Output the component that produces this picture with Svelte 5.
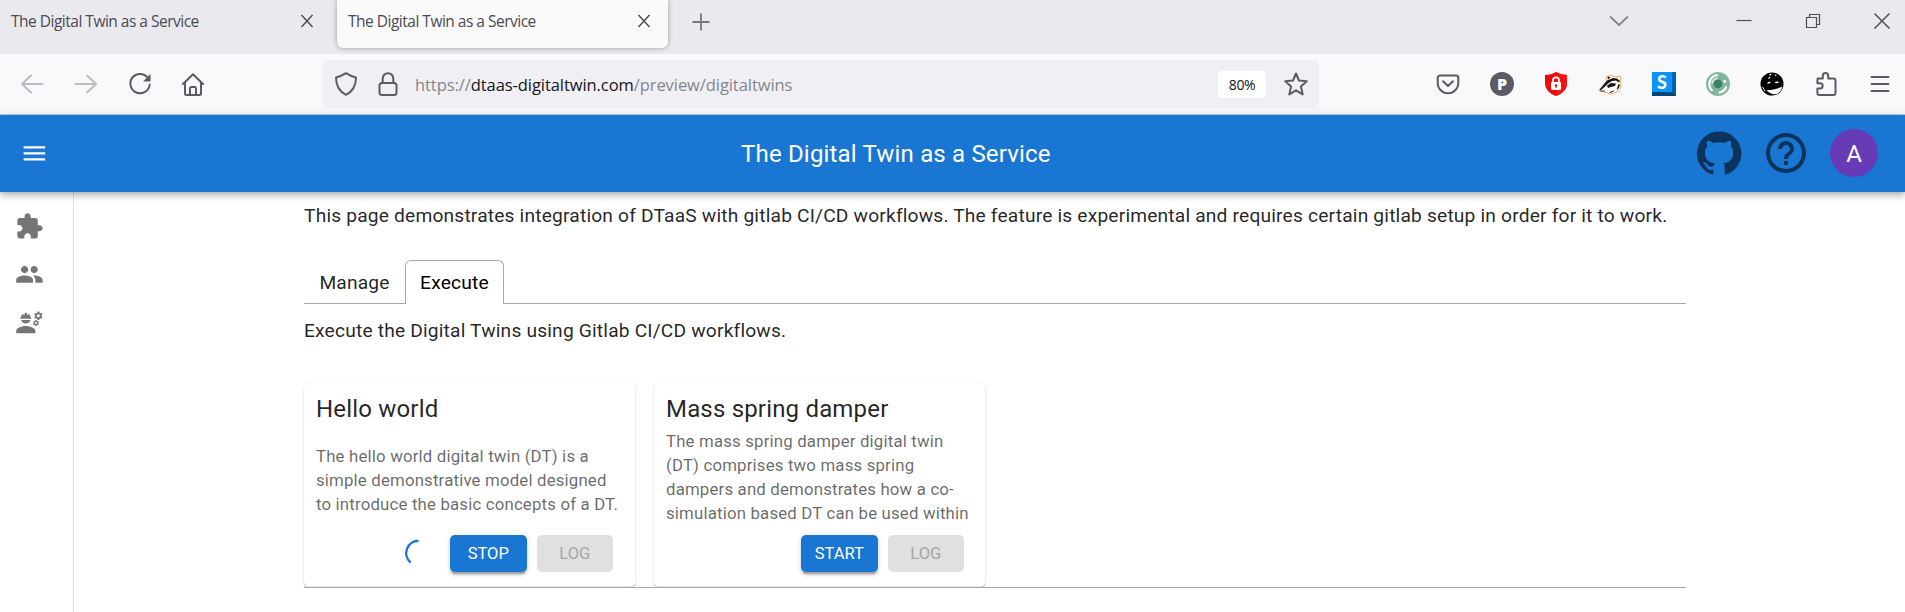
<script>
  const tabs = [
    { title: 'The Digital Twin as a Service', active: false },
    { title: 'The Digital Twin as a Service', active: true }
  ];
  const cards = [
    {
      name: 'Hello world',
      lines: ['The hello world digital twin (DT) is a', 'simple demonstrative model designed', 'to introduce the basic concepts of a DT.'],
      action: 'Stop',
      running: true
    },
    {
      name: 'Mass spring damper',
      lines: ['The mass spring damper digital twin', '(DT) comprises two mass spring', 'dampers and demonstrates how a co-', 'simulation based DT can be used within'],
      action: 'Start',
      running: false
    }
  ];
  const menu = [
    'M20.5 11H19V7c0-1.1-.9-2-2-2h-4V3.5C13 2.12 11.88 1 10.5 1S8 2.12 8 3.5V5H4c-1.1 0-1.99.9-1.99 2v3.8H3.5c1.49 0 2.7 1.21 2.7 2.7s-1.21 2.7-2.7 2.7H2V20c0 1.1.9 2 2 2h3.8v-1.5c0-1.49 1.21-2.7 2.7-2.7 1.49 0 2.7 1.21 2.7 2.7V22H17c1.1 0 2-.9 2-2v-4h1.5c1.38 0 2.5-1.12 2.5-2.5S21.88 11 20.5 11z',
    'M16 11c1.66 0 2.99-1.34 2.99-3S17.66 5 16 5c-1.66 0-3 1.34-3 3s1.34 3 3 3zm-8 0c1.66 0 2.99-1.34 2.99-3S9.66 5 8 5C6.34 5 5 6.34 5 8s1.34 3 3 3zm0 2c-2.33 0-7 1.17-7 3.5V19h14v-2.5c0-2.33-4.67-3.5-7-3.5zm8 0c-.29 0-.62.02-.97.05 1.16.84 1.97 1.97 1.97 3.45V19h6v-2.5c0-2.33-4.67-3.5-7-3.5z',
    'M9 15c-2.67 0-8 1.34-8 4v2h16v-2c0-2.66-5.33-4-8-4zM22.1 6.84c.01-.11.02-.22.02-.34 0-.12-.01-.23-.03-.34l.74-.58c.07-.05.08-.15.04-.22l-.7-1.21c-.04-.08-.14-.1-.21-.08l-.86.35c-.18-.14-.38-.25-.59-.34l-.13-.93c-.02-.09-.09-.15-.18-.15h-1.4c-.09 0-.16.06-.17.15l-.13.93c-.21.09-.41.21-.59.34l-.87-.35c-.08-.03-.17 0-.21.08l-.7 1.21c-.04.08-.03.17.04.22l.74.58c-.02.11-.03.23-.03.34 0 .11.01.23.03.34l-.74.58c-.07.05-.08.15-.04.22l.7 1.21c.04.08.14.1.21.08l.87-.35c.18.14.38.25.59.34l.13.93c.01.09.08.15.17.15h1.4c.09 0 .16-.06.17-.15l.13-.93c.21-.09.41-.21.59-.34l.87.35c.08.03.17 0 .21-.08l.7-1.21c.04-.08.03-.17-.04-.22l-.73-.58zm-2.6.91c-.69 0-1.25-.56-1.25-1.25s.56-1.25 1.25-1.25 1.25.56 1.25 1.25-.56 1.25-1.25 1.25zM19.92 11.68l-.5-.87c-.03-.06-.1-.08-.15-.06l-.62.25c-.13-.1-.27-.18-.42-.24l-.09-.66c-.02-.06-.08-.1-.14-.1h-1c-.06 0-.11.04-.12.11l-.09.66c-.15.06-.29.15-.42.24l-.62-.25c-.06-.02-.12 0-.15.06l-.5.87c-.03.06-.02.12.03.16l.53.41c-.01.08-.02.16-.02.24 0 .08.01.17.02.24l-.53.41c-.05.04-.06.11-.03.16l.5.87c.03.06.1.08.15.06l.62-.25c.13.1.27.18.42.24l.09.66c.01.07.06.11.12.11h1c.06 0 .12-.04.12-.11l.09-.66c.15-.06.29-.15.42-.24l.62.25c.06.02.12 0 .15-.06l.5-.87c.03-.06.02-.12-.03-.16l-.52-.41c.01-.08.02-.16.02-.24 0-.08-.01-.17-.02-.24l.53-.41c.05-.04.06-.11.04-.17zm-2.42 1.65c-.46 0-.83-.38-.83-.83 0-.46.38-.83.83-.83s.83.38.83.83c0 .46-.37.83-.83.83zM4.74 9h8.53c.27 0 .49-.22.49-.49v-.02c0-.27-.22-.49-.49-.49H13c0-1.48-.81-2.75-2-3.45v.95c0 .28-.22.5-.5.5s-.5-.22-.5-.5V4.14C9.68 4.06 9.35 4 9 4s-.68.06-1 .14V5.5c0 .28-.22.5-.5.5S7 5.78 7 5.5v-.95C5.81 5.25 5 6.52 5 8h-.26c-.27 0-.49.22-.49.49v.03c0 .26.22.48.49.48zM9 13c1.86 0 3.41-1.28 3.86-3H5.14c.45 1.72 2 3 3.86 3z'
  ];
</script>

<div class="window">
  <div class="tabstrip">
    {#each tabs as t}
      <div class="btab" class:current={t.active}>
        <span>{t.title}</span>
        <svg width="14" height="14" viewBox="0 0 14 14"><path d="M1.5 1l11 12M12.5 1l-11 12" /></svg>
      </div>
    {/each}
    <svg class="plus" width="18" height="18" viewBox="0 0 18 18"><path d="M9 .5v17M.5 9h17" /></svg>
    <div class="controls">
      <svg class="chev" width="20" height="12" viewBox="0 0 20 12"><path d="M1 1.5l9 8.5 9-8.5" /></svg>
      <svg class="min" width="16" height="16" viewBox="0 0 16 16"><path d="M.5 7.5h15" /></svg>
      <svg class="restore" width="16" height="16" viewBox="0 0 16 16"><path d="M1.5 4.5h10v10h-10zM4.5 4V1.5h10v10H12" /></svg>
      <svg width="18" height="18" viewBox="0 0 18 18"><path d="M1.5 1.5l15 15M16.5 1.5l-15 15" /></svg>
    </div>
  </div>

  <div class="toolbar">
    <div class="nav">
      <svg class="dim" viewBox="0 0 24 24"><path d="M22.5 12H2.5M11 3.5L2 12l9 8.5" /></svg>
      <svg class="dim" viewBox="0 0 24 24"><path d="M1.500 12h20M13 3.500l9 8.500-9 8.500" /></svg>
      <svg viewBox="0 0 24 24"><path d="M20.300 6.500A9.700 9.700 0 1 0 21.700 12.500" /><path d="M22.500 2v7.500H15z" class="solid" /></svg>
      <svg viewBox="1 0 24 24"><path d="M2 12L12 2.200 22 12M4 10.500V21.500a1.500 1.500 0 0 0 1.500 1.500h13a1.500 1.500 0 0 0 1.500-1.500V10.500M9 23v-6.500a1.500 1.500 0 0 1 1.500-1.500h3a1.500 1.500 0 0 1 1.500 1.500V23" /></svg>
    </div>
    <div class="urlbar">
      <svg viewBox="0 0 24 24"><path d="M12 1.200c3 2 6 3.300 10 4.200 0 7.500-2.600 13.600-10 17.400C4.600 19 2 12.900 2 5.400 6 4.500 9 3.200 12 1.200z" /></svg>
      <svg class="lock" viewBox="0 0 24 24"><rect x="3.500" y="11" width="17" height="12" rx="2.500" /><path d="M6.700 11V6.500a5.300 5.300 0 0 1 10.600 0V11" /></svg>
      <p>https://<b>dtaas-digitaltwin.com</b>/preview/digitaltwins</p>
      <span class="zoomlevel">80%</span>
      <svg viewBox="0 0 24 24"><path d="M12 1.500l3 7 7.800.8-5.900 5.200 1.800 7.900-6.700-4.100-6.700 4.100 1.800-7.900L1.200 9.300l7.800-.8z" /></svg>
    </div>
    <div class="addons">
      <svg viewBox="0 0 24 24"><path d="M4 3.500h16a2.300 2.300 0 0 1 2.300 2.300V11a10.300 10.300 0 0 1-20.600 0V5.800A2.300 2.300 0 0 1 4 3.500zM7 9.200l5 4.800 5-4.800" /></svg>
      <div class="disc">P</div>
      <svg viewBox="0 0 24 24" class="flat"><path d="M12 0c3.500 2 7 2.700 11 3v8c0 6-4 10.500-11 13C5 21.500 1 17 1 11V3c4-.3 7.500-1 11-3z" fill="#e80d0d" /><path d="M12 0c3.500 2 7 2.700 11 3v8c0 6-4 10.500-11 13z" fill="#fb1111" /><rect x="7" y="10" width="10" height="8" rx="1" fill="#fff" /><path d="M9 10.500V8.300a3 3 0 0 1 6 0v2.200" fill="none" stroke="#fff" stroke-width="1.800" /><circle cx="12" cy="13.500" r="1.300" fill="#e80d0d" /><path d="M11.500 13.500h1V16h-1z" fill="#e80d0d" /></svg>
      <svg viewBox="0 0 24 24" class="flat"><path d="M1 18.500L6 12.500 9 9 8.500 5l4-1.500 5 1.500 4.500-.8 1 2.500-1 3 1 3-1.500 5-4 3-6 1.500-2.500-1.500-4-1z" fill="#fff" stroke="#f5a55a" stroke-width="1" /><path d="M9 8.500l6-2.500 4 .5 3 2.500-1 1.500-3-2-4 .5-4 2.500-3.500 3.500-4 3.500-1-.8z" fill="#151515" /><path d="M9 13.500l4-2.500 5 .5-1 2.500-4 1-3 1z" fill="#151515" /><path d="M9.500 4.500l3 .8-2.300 2.200zM20.500 12l1.500 1-1.500 3.500-2 1.500z" fill="#151515" /><path d="M3 19h3.500M12 20.500l3.500-1.500" stroke="#333" stroke-width="1.200" /></svg>
      <div class="stylebadge"><span>S</span></div>
      <svg viewBox="0 0 24 24" class="flat"><circle cx="12" cy="12" r="12" fill="#7fb79d" /><circle cx="12" cy="12" r="4.400" fill="#3c8067" /><path d="M11 3.200a9 9 0 0 0-5.200 15M13.500 20.500a8.800 8.800 0 0 0 6.500-5.200" fill="none" stroke="#fff" stroke-width="2.200" stroke-linecap="round" /><path d="M11 6.500A6 6 0 0 0 6.200 11" fill="none" stroke="#dcebe4" stroke-width="1.600" /><circle cx="18.700" cy="9.300" r="1.500" fill="#fff" /></svg>
      <svg viewBox="0 0 24 24" class="flat"><circle cx="12" cy="12" r="11.500" fill="#000" /><path d="M6.500 18c5 .2 10-.8 15.800-3.500-.6 3.500-2.700 6-5.600 7.400-3.800.9-7.700-.6-10.200-3.900z" fill="#fff" /><path d="M7 11.500c1-1.500 2.500-2 3.800-1.400-.8 1.400-2.300 1.800-3.800 1.400zM14.500 10.500c1.200-1.200 3.500-1.200 4.500-.3-1 1.200-3.100 1.300-4.500.3zM9 3c.8-1 2-1.400 2.800-1l-1.500 1.800zM14.500 2.500l2.300.5-1.200 1.200zM8 6.500l1.500-2 .8 1-1.300 1.600z" fill="#fff" /><path d="M2.500 15l2.500 4" stroke="#fff" stroke-width=".9" /></svg>
      <svg viewBox="0 0 24 24"><path d="M3.600 6.500h5.200V3.800a2.700 2.700 0 0 1 5.400 0v2.700h5.300a2 2 0 0 1 2 2V21a2 2 0 0 1-2 2H5.400a2 2 0 0 1-2-2v-4.600h2.700a2.600 2.600 0 0 0 0-5.200H3.400V8.500a2 2 0 0 1 2-2" /></svg>
      <svg viewBox="0 0 24 24"><path d="M3.500 5h17M3.500 12h17M3.500 19h17" /></svg>
    </div>
  </div>

  <header>
    <svg class="burger" viewBox="0 0 24 24"><path d="M3 18h18v-2H3v2zm0-5h18v-2H3v2zm0-7v2h18V6H3z" /></svg>
    <h1>The Digital Twin as a Service</h1>
    <svg class="big gh" viewBox="0 0 24 24"><path d="M12 1.270a11 11 0 00-3.480 21.460c.55.09.73-.28.73-.55v-1.840c-3.030.64-3.670-1.460-3.670-1.460-.55-1.290-1.280-1.650-1.280-1.650-.92-.65.1-.65.1-.65 1.100 0 1.730 1.100 1.730 1.100.92 1.650 2.570 1.200 3.210.92a2 2 0 01.64-1.470c-2.470-.27-5.040-1.190-5.040-5.500 0-1.100.46-2.100 1.200-2.840a3.760 3.760 0 010-2.930s.91-.28 3.110 1.100c1.800-.49 3.700-.49 5.500 0 2.100-1.380 3.020-1.100 3.020-1.100a3.760 3.760 0 01.1 2.930c.83.74 1.200 1.740 1.200 2.940 0 4.210-2.570 5.130-5.040 5.400.45.37.82.92.82 2.020v3.030c0 .27.1.64.73.55A11 11 0 0012 1.270" /></svg>
    <svg class="big help" viewBox="0 0 24 24"><path d="M11 18h2v-2h-2v2zm1-16C6.480 2 2 6.480 2 12s4.480 10 10 10 10-4.480 10-10S17.520 2 12 2zm0 18c-4.410 0-8-3.590-8-8s3.590-8 8-8 8 3.590 8 8-3.590 8-8 8zm0-14c-2.210 0-4 1.790-4 4h2c0-1.100.9-2 2-2s2 .9 2 2c0 2-3 1.750-3 5h2c0-2.250 3-2.500 3-5 0-2.210-1.790-4-4-4z" /></svg>
    <div class="avatar">A</div>
  </header>

  <div class="body">
    <aside>
      {#each menu as d}
        <svg viewBox="0 0 24 24"><path {d} /></svg>
      {/each}
    </aside>
    <main>
      <p class="intro">This page demonstrates integration of DTaaS with gitlab CI/CD workflows. The feature is experimental and requires certain gitlab setup in order for it to work.</p>
      <div class="tablist">
        <div class="tab">Manage</div>
        <div class="tab selected">Execute</div>
      </div>
      <p class="lead">Execute the Digital Twins using Gitlab CI/CD workflows.</p>
      <div class="cards">
        {#each cards as c}
          <section>
            <h2>{c.name}</h2>
            <div class="desc" class:short={c.lines.length < 4}>
              {#each c.lines as l}<div>{l}</div>{/each}
            </div>
            <div class="actions">
              {#if c.running}
                <svg class="spinner" width="28" height="28" viewBox="0 0 28 28"><path d="M14.500 1.800A12.300 12.300 0 0 0 6.600 23.500" /></svg>
              {/if}
              <button class="primary">{c.action}</button>
              <button disabled>Log</button>
            </div>
          </section>
        {/each}
      </div>
    </main>
  </div>
</div>

<style>
  :global(body) { background: #fff; overflow: hidden; }
  .window { width: 1905px; height: 612px; overflow: hidden; display: flex; flex-direction: column; font-family: Roboto, sans-serif; color: rgba(0, 0, 0, .87); }
  svg { flex: none; display: block; }
  p, h1, h2 { margin: 0; font-weight: 400; }

  .tabstrip { height: 54px; flex: none; box-sizing: border-box; background: #eae9ee; display: flex; align-items: flex-start; font: 15.500px "Open Sans", sans-serif; color: #4a4a52; }
  .tabstrip svg { fill: none; stroke: #4e4e56; stroke-width: 1.500; }
  .btab { width: 331px; height: 48px; box-sizing: border-box; padding: 0 17px 6px 11px; display: flex; align-items: center; justify-content: space-between; border-radius: 0 0 6px 6px; margin-right: 6px; letter-spacing: -.5px; white-space: nowrap; }
  .btab span { padding-bottom: 1px; }
  .btab.current { background: #fafafa; box-shadow: 0 0 5px rgba(0, 0, 0, .35); }
  .tabstrip .plus { margin: 13px 0 0 18px; stroke: #75757c; stroke-width: 1.800; }
  .controls { margin-left: auto; display: flex; align-items: center; height: 42px; padding-right: 14px; }
  .tabstrip .chev { margin-right: 107px; stroke: #85858b; stroke-width: 1.800; }
  .min { margin-right: 53px; }
  .restore { margin-right: 52px; }
  .controls .min, .controls .restore { stroke-width: 1.200; }

  .toolbar { height: 61px; flex: none; box-sizing: border-box; border-bottom: 1px solid #c9c9cd; background: #f9f9fb; display: flex; align-items: center; padding: 0 13px 0 20px; }
  .toolbar svg { width: 24px; height: 24px; fill: none; stroke: #5b5b66; stroke-width: 2; stroke-linejoin: round; stroke-linecap: round; }
  .toolbar svg.dim { stroke: #bdbcc3; }
  .toolbar svg .solid { fill: #5b5b66; stroke: none; }
  .toolbar svg.flat { stroke: none; }
  .nav, .addons { display: flex; gap: 30px; }
  .urlbar { margin-left: 117px; width: 996px; height: 48px; box-sizing: border-box; background: #f0f0f4; border-radius: 6px; display: flex; align-items: center; padding: 0 11px; }
  .urlbar .lock { margin-left: 18px; }
  .urlbar p { margin-left: 15px; font: 16.500px "Open Sans", sans-serif; letter-spacing: -.07px; color: #85858c; }
  .urlbar b { font-weight: 400; color: #15141a; }
  .zoomlevel { margin-left: auto; margin-right: 18px; width: 48px; height: 27px; border-radius: 4px; background: #fff; text-align: center; font: 14px/27px "Open Sans", sans-serif; letter-spacing: -.4px; color: #15141a; }
  .addons { margin-left: auto; }
  .disc { width: 24px; height: 24px; border-radius: 50%; background: #5b5b66; color: #fff; font: 800 16px/24px "Open Sans", sans-serif; text-align: center; }
  .stylebadge { width: 24px; height: 24px; box-sizing: border-box; border-right: 4px solid #0063a8; border-bottom: 4px solid #004577; background: #0a94ff; color: #fff; font: 900 18px/20px Lato, sans-serif; text-align: center; }

  header { height: 77px; flex: none; box-sizing: border-box; background: #1976d2; display: flex; align-items: center; padding: 0 27px 0 20px; position: relative; z-index: 2; box-shadow: 0 2.400px 4.800px -1.200px rgba(0, 0, 0, .2), 0 4.800px 6px rgba(0, 0, 0, .14), 0 1.200px 12px rgba(0, 0, 0, .12); color: #fff; }
  .burger { width: 28.800px; height: 28.800px; fill: #fff; }
  h1 { flex: 1; padding: 2px 0 0 48px; text-align: center; font-size: 24px; line-height: 38.400px; letter-spacing: .18px; }
  .big { width: 48px; height: 48px; fill: rgba(0, 0, 0, .56); margin-bottom: 1px; }
  .help { margin: 0 20px 1px 19px; }
  .avatar { width: 48px; height: 48px; border-radius: 50%; background: #673ab7; text-align: center; font-size: 24px; line-height: 50px; margin-bottom: 1px; }

  .body { flex: 1; display: flex; min-height: 0; }
  aside { width: 74px; box-sizing: border-box; border-right: 1px solid #e0e0e0; padding: 19.800px 0 0 15px; display: flex; flex-direction: column; gap: 19.200px; }
  aside svg { width: 28.800px; height: 28.800px; fill: #757575; }
  main { width: 1382px; margin-left: 230px; font-size: 19.200px; line-height: 28.800px; letter-spacing: .18px; }
  .intro { padding-top: 10px; white-space: nowrap; }
  .tablist { display: flex; margin-top: 29px; height: 44px; box-sizing: border-box; border-bottom: 1px solid #aaa; }
  .tab { height: 44px; box-sizing: border-box; padding: 8px 14px 0 14.400px; border: 1px solid transparent; border-bottom: 0; border-radius: 6px 6px 0 0; }
  .tab.selected { background: #fff; border-color: #aaa; color: #000; }
  .lead { padding-top: 13px; }
  .cards { display: flex; gap: 19px; margin-top: 37px; border-bottom: 1px solid #aaa; }
  section { width: 331px; height: 204px; box-sizing: border-box; padding: 8px 12px 0; border-radius: 5px; background: #fff; clip-path: inset(-5px -5px 0 -5px); box-shadow: 0 2.400px 1.200px -1.200px rgba(0, 0, 0, .2), 0 1.200px 1.200px rgba(0, 0, 0, .14), 0 1.200px 3.600px rgba(0, 0, 0, .12); }
  h2 { font-size: 24px; line-height: 36px; letter-spacing: .18px; }
  .desc { height: 96px; margin-top: 2px; overflow: hidden; font-size: 16.800px; line-height: 24px; letter-spacing: .18px; color: rgba(0, 0, 0, .6); white-space: nowrap; }
  .desc.short { padding-top: 15px; box-sizing: border-box; }
  .actions { display: flex; justify-content: flex-end; align-items: center; gap: 10px; margin-top: 10px; padding-right: 10px; }
  section + section .actions { padding-right: 9px; }
  .spinner { margin-right: 8px; fill: none; stroke: #1976d2; stroke-width: 2.400; }
  button { width: 76.500px; height: 37px; padding: 0; border: 0; border-radius: 5px; font: 400 16.500px Roboto, sans-serif; text-transform: uppercase; background: #e0e0e0; color: #a6a6a6; }
  button.primary { background: #1976d2; color: #fff; box-shadow: 0 3.600px 1.200px -2.400px rgba(0, 0, 0, .2), 0 2.400px 2.400px rgba(0, 0, 0, .14), 0 1.200px 6px rgba(0, 0, 0, .12); }
</style>
